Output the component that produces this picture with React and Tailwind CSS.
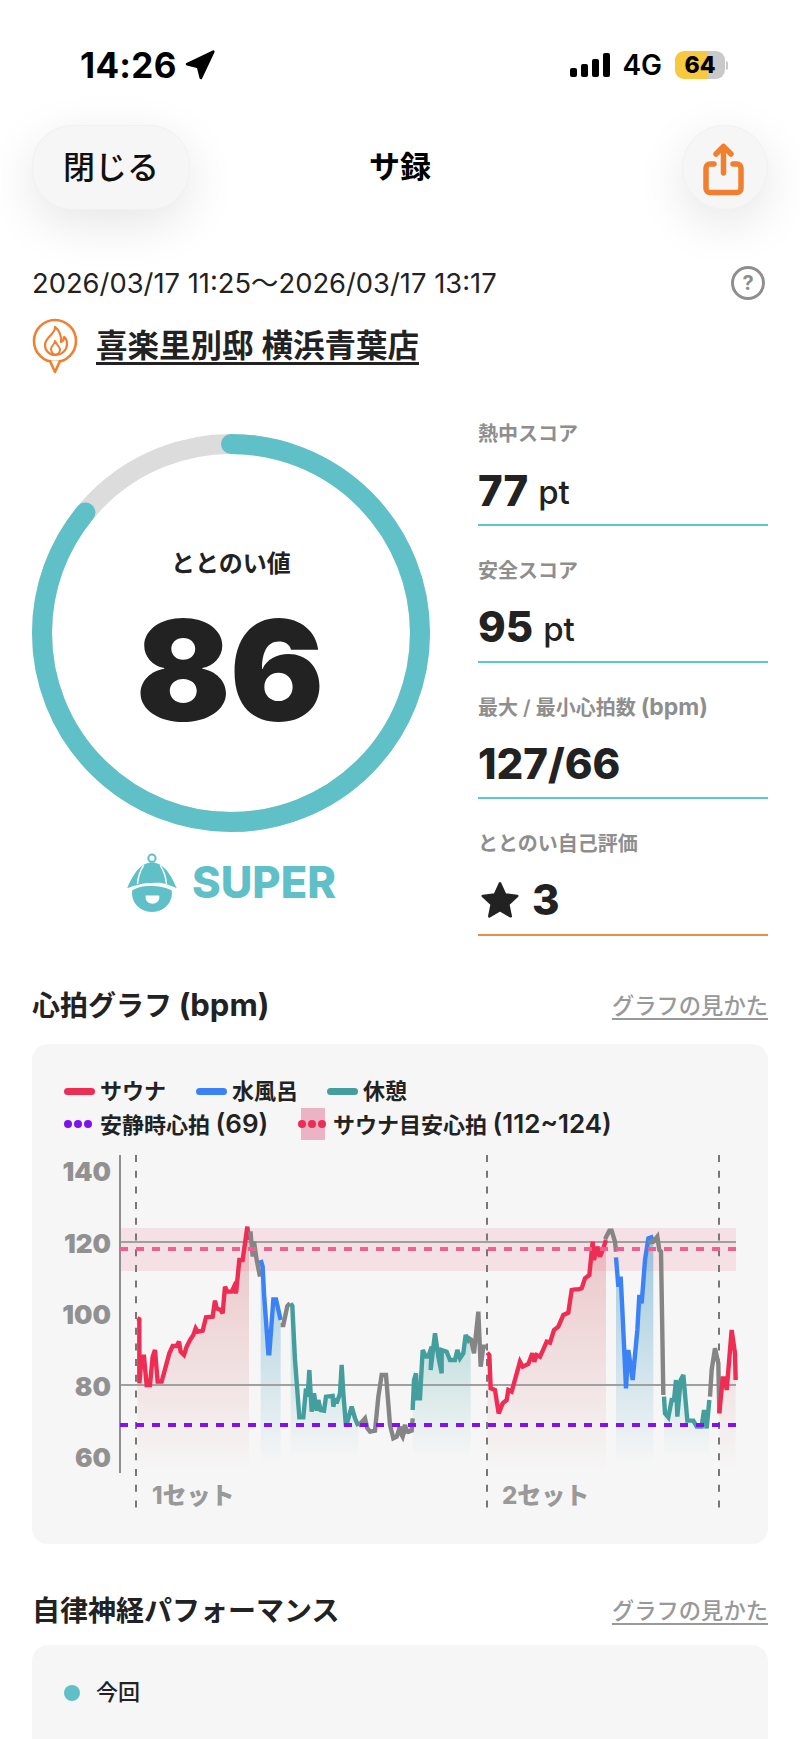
import React from "react";
import { Navigation } from "lucide-react";

// chart points are traced from the 3x crops, so they get converted to page px here
const L = (pts) => pts.map(([x, y]) => [30 + x / 3, 1060 + y / 3]);
const R = (pts) => pts.map(([x, y]) => [400 + x / 3, 1060 + y / 3]);

const RED = "#EE2D55";
const BLUE = "#3B82F6";
const TEAL = "#459E9E";
const GRAY = "#858585";

const segments = [
  { c: RED, fill: "red", pts: L([[322,775],[328,778],[328,970],[335,890],[342,890],[350,975],[360,975],[368,890],[375,870],[383,965],[395,965],[418,880],[428,858],[440,858],[447,845],[452,875],[462,885],[470,860],[480,840],[490,825],[497,805],[503,815],[518,812],[528,772],[548,770],[555,722],[560,745],[572,750],[578,760],[585,680],[592,695],[605,695],[612,680],[618,700],[628,600],[638,600],[652,500],[657,540]]) },
  { c: GRAY, pts: L([[655,520],[662,520],[668,590],[672,545],[680,600],[690,650]]) },
  { c: BLUE, fill: "blue", pts: L([[692,600],[698,620],[702,700],[715,880],[718,880],[730,718],[738,718],[752,780]]) },
  { c: GRAY, pts: L([[752,795],[760,795],[772,738],[780,730]]) },
  { c: TEAL, fill: "teal", pts: L([[782,730],[787,738],[795,900],[808,1072],[820,1072],[828,985],[833,1010],[838,930],[845,1055],[852,1000],[860,1052],[865,1020],[872,1050],[882,1052],[888,1010],[908,1008],[910,1040],[916,1015],[920,1030],[930,1000],[935,915],[940,1000],[948,1100],[955,1075],[965,1040],[975,1075],[985,1098]]) },
  { c: GRAY, pts: L([[985,1098],[1005,1075],[1012,1105],[1020,1115],[1035,1112],[1045,1010],[1055,945],[1068,945],[1080,1095],[1090,1135],[1100,1130],[1110,1100],[1115,1125],[1125,1095],[1130,1115],[1140,1115]]) },
  { c: GRAY, pts: R([[0,1115],[8,1130],[15,1105],[25,1115],[35,1112],[38,1075]]) },
  { c: TEAL, fill: "teal", pts: R([[38,1050],[42,960],[48,940],[52,1015],[60,1015],[68,870],[78,890],[85,890],[95,860],[92,930],[105,820],[115,890],[125,940],[125,870],[140,875],[150,900],[165,900],[172,870],[180,895],[190,880],[197,825],[205,840],[212,830]]) },
  { c: GRAY, pts: R([[212,835],[222,880],[235,755],[242,920],[250,860],[262,860]]) },
  { c: RED, fill: "red", pts: R([[262,878],[268,885],[272,985],[285,990],[296,1060],[308,1030],[320,1020],[325,990],[335,995],[360,905],[368,920],[385,912],[397,880],[403,905],[410,885],[420,890],[430,868],[440,845],[450,848],[462,810],[475,800],[490,765],[505,758],[515,690],[525,688],[535,688],[545,685],[555,655],[568,645],[578,545],[582,600],[592,560],[600,590],[610,565],[618,540]]) },
  { c: GRAY, pts: R([[615,538],[628,512],[635,512],[645,545],[648,575]]) },
  { c: BLUE, fill: "blue", pts: R([[648,592],[655,680],[662,650],[668,770],[678,985],[685,870],[698,960],[712,810],[718,705],[725,730],[735,600],[745,535],[760,530]]) },
  { c: GRAY, pts: R([[745,548],[760,545],[772,530],[778,570],[783,575],[790,1005]]) },
  { c: TEAL, fill: "teal", pts: R([[792,1010],[795,1060],[805,1072],[815,1020],[822,1020],[828,960],[832,1070],[842,960],[850,945],[862,1082],[880,1082],[890,1100],[905,1100],[912,1050],[920,1105],[928,1020]]) },
  { c: GRAY, pts: R([[930,1010],[935,930],[945,865],[955,910],[958,1060]]) },
  { c: RED, fill: "red", pts: R([[958,1060],[968,955],[975,955],[980,990],[995,810],[1005,880],[1007,960]]) },
];

const toLine = (pts) => pts.map((p) => p.join(",")).join(" ");
const toFill = (pts) => {
  const first = pts[0];
  const last = pts[pts.length - 1];
  return `M${first[0]},1475 L${toLine(pts)} L${last[0]},1475 Z`;
};

const HeartChart = () => (
  <svg viewBox="32 1150 736 370" width="736" height="370" className="block mt-[10px]">
    <defs>
      <linearGradient id="red" gradientUnits="userSpaceOnUse" x1="0" y1="1240" x2="0" y2="1472">
        <stop offset="0" stopColor="#d8787c" stopOpacity="0.38" />
        <stop offset="1" stopColor="#d8787c" stopOpacity="0" />
      </linearGradient>
      <linearGradient id="blue" gradientUnits="userSpaceOnUse" x1="0" y1="1250" x2="0" y2="1464">
        <stop offset="0" stopColor="#5aa8cc" stopOpacity="0.55" />
        <stop offset="1" stopColor="#5aa8cc" stopOpacity="0" />
      </linearGradient>
      <linearGradient id="teal" gradientUnits="userSpaceOnUse" x1="0" y1="1330" x2="0" y2="1458">
        <stop offset="0" stopColor="#3fa3a3" stopOpacity="0.3" />
        <stop offset="1" stopColor="#3fa3a3" stopOpacity="0" />
      </linearGradient>
    </defs>

    <rect x="120" y="1228" width="616" height="43" fill="#F5E0E6" />

    {segments.filter((s) => s.fill).map((s, i) => (
      <path key={i} d={toFill(s.pts)} fill={`url(#${s.fill})`} />
    ))}

    <line x1="120" x2="736" y1="1242" y2="1242" stroke="#a0a0a0" strokeWidth="2" />
    <line x1="120" x2="736" y1="1385" y2="1385" stroke="#a0a0a0" strokeWidth="2" />
    <line x1="120" x2="120" y1="1155" y2="1473" stroke="#8e8e8e" strokeWidth="2" />

    {[136, 487, 719].map((x) => (
      <line key={x} x1={x} x2={x} y1="1155" y2="1514" stroke="#777" strokeWidth="2" strokeDasharray="7 8.7" />
    ))}

    {segments.map((s, i) => (
      <polyline key={i} points={toLine(s.pts)} fill="none" stroke={s.c} strokeWidth="4.4" strokeLinejoin="miter" strokeMiterlimit="3" />
    ))}

    <line x1="120" x2="736" y1="1249" y2="1249" stroke="#EE6090" strokeWidth="4" strokeDasharray="8 8" />
    <line x1="120" x2="736" y1="1425" y2="1425" stroke="#8012F2" strokeWidth="4" strokeDasharray="8 8" />

    {[[140, 1171], [120, 1243], [100, 1314], [80, 1386], [60, 1457]].map(([n, y]) => (
      <text key={n} x="111" y={y} dy="9.5" textAnchor="end" fill="#919191" fontSize="26" fontWeight="900">{n}</text>
    ))}
    <text x="152" y="1504" fill="#999" fontSize="24" fontWeight="800">1セット</text>
    <text x="502" y="1504" fill="#999" fontSize="24" fontWeight="800">2セット</text>
  </svg>
);

const Swatch = ({ className }) => <span className={`w-[31px] h-[7px] rounded-full ${className}`} />;

const Dots = ({ className }) => (
  <span className="flex gap-[2px] relative">
    <span className={`w-[8px] h-[8px] rounded-full ${className}`} />
    <span className={`w-[8px] h-[8px] rounded-full ${className}`} />
    <span className={`w-[8px] h-[8px] rounded-full ${className}`} />
  </span>
);

const Stat = ({ label, children, line = "border-[#58C8C8]" }) => (
  <div className={`border-b-2 ${line} h-[106px] pb-[9px]`}>
    <div className="h-[28px] leading-[28px] text-[20px] font-semibold text-[#8e8e8e] whitespace-nowrap">{label}</div>
    <div className="mt-[17px] h-[50px] flex items-center text-[#222] whitespace-nowrap">{children}</div>
  </div>
);

const SectionHead = ({ children }) => (
  <div className="h-[40px] flex items-center justify-between">
    <h2 className="text-[28px] font-bold text-[#222] whitespace-nowrap">{children}</h2>
    <a className="text-[22.3px] font-medium text-[#999] underline underline-offset-[4px] whitespace-nowrap">グラフの見かた</a>
  </div>
);

export default function App() {
  return (
    <div className="w-[800px] h-[1739px] overflow-hidden bg-white font-[Inter,'Noto_Sans_CJK_JP',sans-serif]">
      {/* status bar */}
      <div className="h-[125px] pt-[45px] pl-[80px] pr-[72px] flex justify-between items-start">
        <div className="h-[40px] flex items-center gap-[6px]">
          <span className="text-[35px] font-bold text-black tracking-[0.3px]">14:26</span>
          <Navigation className="w-[33px] h-[33px] text-black" fill="currentColor" />
        </div>
        <div className="h-[40px] flex items-center">
          <div className="flex items-end gap-[3.5px] h-[24px]">
            <span className="w-[7.5px] h-[9px] rounded-[2px] bg-black" />
            <span className="w-[7.5px] h-[13px] rounded-[2px] bg-black" />
            <span className="w-[7.5px] h-[18px] rounded-[2px] bg-black" />
            <span className="w-[7.5px] h-[24px] rounded-[2px] bg-black" />
          </div>
          <span className="ml-[12px] text-[28px] font-semibold text-black">4G</span>
          <div className="ml-[13px] relative w-[50px] h-[28px] rounded-[9px] overflow-hidden flex">
            <span className="w-[32px] bg-[#F7C840]" />
            <span className="flex-1 bg-[#C9C9C9]" />
            <span className="absolute inset-0 flex items-center justify-center text-[23px] font-extrabold text-black">64</span>
          </div>
          <span className="ml-[1px] w-[2px] h-[9px] rounded-r-full bg-[#C9C9C9]" />
        </div>
      </div>

      {/* nav */}
      <div className="h-[85px] pl-[32px] pr-[32px] grid grid-cols-[1fr_auto_1fr] items-center">
        <button className="justify-self-start w-[158px] h-[85px] rounded-[40px] bg-[#F6F6F6] border border-[#f1f1f1] shadow-[0_14px_50px_rgba(0,0,0,0.1)] text-[32px] font-medium text-[#111]">閉じる</button>
        <div className="text-[31px] font-bold text-black">サ録</div>
        <button className="justify-self-end w-[86px] h-[85px] rounded-full bg-[#F6F6F6] border border-[#f1f1f1] shadow-[0_14px_50px_rgba(0,0,0,0.1)] flex items-center justify-center">
          <svg width="48" height="56" viewBox="0 0 48 56" fill="none" stroke="#F08030" strokeWidth="5.5" strokeLinecap="round" strokeLinejoin="round">
            <path d="M13 24 H9 a4 4 0 0 0 -4 4 V48.5 a4 4 0 0 0 4 4 H36 a4 4 0 0 0 4 -4 V28 a4 4 0 0 0 -4 -4 H32" />
            <path d="M22.5 33 V7" />
            <path d="M15 14 L22.5 6.5 L30 14" />
          </svg>
        </button>
      </div>

      <div className="px-[32px]">
        {/* date */}
        <div className="mt-[56px] h-[34px] flex items-center justify-between">
          <span className="text-[27.35px] text-[#222] whitespace-nowrap">2026/03/17 11:25～2026/03/17 13:17</span>
          <span className="w-[34px] h-[34px] mr-[3px] rounded-full border-[3.5px] border-[#8e8e8e] flex items-center justify-center text-[20px] font-bold text-[#8e8e8e]">?</span>
        </div>

        {/* venue */}
        <div className="mt-[19px] h-[54px] flex items-center gap-[16px]">
          <svg width="48" height="56" viewBox="0 0 48 56" fill="none" stroke="#F08030" strokeLinejoin="round" strokeLinecap="round" className="shrink-0">
            <circle cx="23" cy="23" r="21" strokeWidth="2.6" />
            <path d="M18 43 L23 54 L28 43" strokeWidth="2.6" fill="white" />
            <path d="M23 9 C24 15 14 19 13 26 C12.5 32 17 37 23 37 C30 37 35 32 35 26 C35 23 33.5 20 32 19 C32 22 31 23.5 29 24 C30 18 27 12 23 9Z" strokeWidth="2.2" />
            <path d="M23 23 C23 26 19 28 19 31 C19 34 21 36.5 23.5 36.5 C26 36.5 28.5 34 28 31 C27.5 29 25 27 23 23Z" strokeWidth="2" />
          </svg>
          <span className="text-[31.5px] font-semibold text-[#222] underline underline-offset-[5px] decoration-[3px] whitespace-nowrap">喜楽里別邸 横浜青葉店</span>
        </div>

        {/* score ring + stats */}
        <div className="mt-[47px] flex">
          <div className="mt-[14px] w-[398px] shrink-0">
            <div className="relative w-[398px] h-[398px]">
              <svg width="398" height="398" viewBox="0 0 398 398" fill="none" strokeWidth="20" className="absolute inset-0">
                <circle cx="199" cy="199" r="189" stroke="#DCDCDC" />
                <circle cx="199" cy="199" r="189" stroke="#5FC0C8" strokeLinecap="round" pathLength="100" strokeDasharray="86 14" transform="rotate(-90 199 199)" />
              </svg>
              <div className="absolute inset-0 flex flex-col items-center">
                <div className="mt-[114px] h-[32px] leading-[32px] text-[24px] font-bold text-[#222]">ととのい値</div>
                <div className="mt-[20px] -ml-[3px] h-[140px] leading-[140px] text-[140px] font-black text-[#222] tracking-[-1px]">86</div>
              </div>
            </div>
            <div className="mt-[21px] h-[60px] flex items-center justify-center gap-[12px]">
              <svg width="54" height="62" viewBox="10 8 52 60" fill="#5FC0C8">
                <circle cx="35" cy="14" r="3.5" fill="none" stroke="#5FC0C8" strokeWidth="2" />
                <path d="M11 43 C16 32 22 19 35 18 C48 19 54 32 59 43 C50 39 44 37 35 38 C26 38 20 40 11 43Z" />
                <path d="M27 21 C23 27 21.5 33 21 39 M43 21 C47 27 48.5 33 49 39" fill="none" stroke="white" strokeWidth="1.4" />
                <path d="M16 45 C24 41 28 41 35 41 C42 41 47 42 54 45 C56 55 48 66 35 66 C22 66 14 55 16 45Z" />
                <path d="M29 50 H42 C43 54 40 58 35.5 58 C31 58 28 54 29 50Z" fill="white" />
              </svg>
              <span className="text-[43.5px] font-extrabold text-[#5FC0C8] leading-none">SUPER</span>
            </div>
          </div>

          <div className="ml-[48px] flex-1 flex flex-col gap-[30.5px]">
            <Stat label="熱中スコア">
              <span className="text-[42px] font-extrabold">77</span>
              <span className="ml-[10px] mt-[6px] text-[33px] font-medium">pt</span>
            </Stat>
            <Stat label="安全スコア">
              <span className="text-[42px] font-extrabold">95</span>
              <span className="ml-[10px] mt-[6px] text-[33px] font-medium">pt</span>
            </Stat>
            <Stat label={<>最大 / 最小心拍数 <span className="text-[23px] font-bold">(bpm)</span></>}>
              <span className="text-[42px] font-extrabold">127/66</span>
            </Stat>
            <Stat label="ととのい自己評価" line="border-[#F08B4A]">
              <svg width="44" height="42" viewBox="0 0 24 24" fill="#222" stroke="#222" strokeWidth="1.5" strokeLinejoin="round">
                <path d="M12 2.5 L14.9 8.9 L21.8 9.7 L16.7 14.4 L18.1 21.3 L12 17.8 L5.9 21.3 L7.3 14.4 L2.2 9.7 L9.1 8.9 Z" />
              </svg>
              <span className="ml-[10px] text-[42px] font-extrabold">3</span>
            </Stat>
          </div>
        </div>

        {/* heart rate */}
        <div className="mt-[50px]">
          <SectionHead>心拍グラフ <span className="text-[31px]">(bpm)</span></SectionHead>
        </div>
        <div className="mt-[18px] h-[500px] rounded-[16px] bg-[#F6F6F6] pt-[32px]">
          <div className="pl-[32px] h-[32px] flex items-center text-[22px] font-semibold text-[#222]">
            <Swatch className="bg-[#EE2D55]" />
            <span className="ml-[5px] w-[96px]">サウナ</span>
            <Swatch className="bg-[#3B82F6]" />
            <span className="ml-[5px] w-[95px]">水風呂</span>
            <Swatch className="bg-[#459E9E]" />
            <span className="ml-[5px]">休憩</span>
          </div>
          <div className="pl-[32px] h-[32px] flex items-center text-[22px] font-semibold text-[#222]">
            <Dots className="bg-[#8012F2]" />
            <span className="ml-[8px] w-[198px] whitespace-nowrap">安静時心拍 <span className="text-[26px]">(69)</span></span>
            <span className="relative w-[28px] h-[32px] flex items-center justify-center">
              <span className="absolute top-0 bottom-0 left-[3px] right-[1px] bg-[#EBB4C4]" />
              <Dots className="bg-[#EE2D55]" />
            </span>
            <span className="ml-[7px] whitespace-nowrap">サウナ目安心拍 <span className="text-[26px]">(112~124)</span></span>
          </div>
          <HeartChart />
        </div>

        {/* autonomic */}
        <div className="mt-[47px]">
          <SectionHead>自律神経パフォーマンス</SectionHead>
        </div>
        <div className="mt-[14px] h-[200px] rounded-[16px] bg-[#F6F6F6] pt-[32px] pl-[32px]">
          <div className="h-[32px] flex items-center gap-[16px]">
            <span className="w-[16px] h-[16px] rounded-full bg-[#5FC0C8]" />
            <span className="text-[22px] font-medium text-[#222]">今回</span>
          </div>
        </div>
      </div>
    </div>
  );
}
